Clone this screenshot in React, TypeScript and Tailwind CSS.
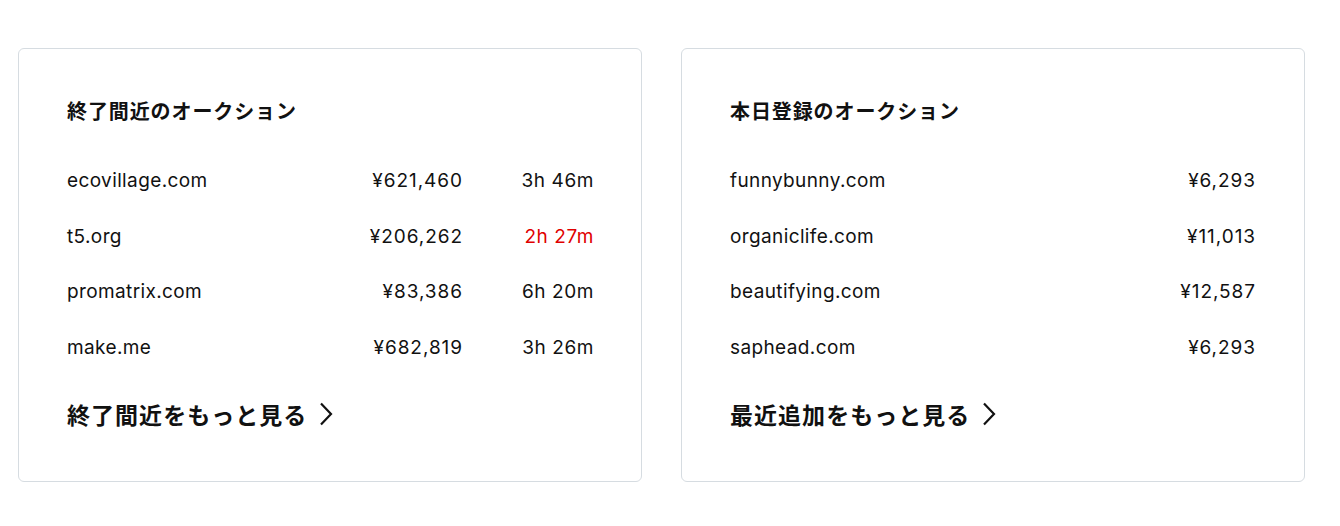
import React from "react";

const font = { fontFamily: 'Inter, "Noto Sans CJK JP", sans-serif' };
const cjk = { fontFamily: '"Noto Sans CJK JP", sans-serif' };

function Chevron() {
  return (
    <svg width="14" height="24" viewBox="0 0 14 24" fill="none" className="ml-[12px]">
      <path d="M2 1.5 L12 12 L2 22.5" stroke="#111" strokeWidth="2.2" strokeLinejoin="miter" />
    </svg>
  );
}

type Row = { name: string; price: string; time?: string; red?: boolean };

function Card({ title, rows, link, showTime }: { title: string; rows: Row[]; link: string; showTime: boolean }) {
  return (
    <div className="w-[624px] border border-[#d6dce1] rounded-[6px] px-12 pt-12 pb-[51px] bg-white">
      <h2 style={cjk} className="text-[20px] leading-[28px] font-bold text-[#111] tracking-[0.045em]">{title}</h2>
      <div className="mt-[29px]">
        {rows.map((r) => (
          <div key={r.name} className="h-[55.4px] flex items-center text-[19px] text-[#111] tracking-[0.02em]">
            <span className="flex-1">{r.name}</span>
            <span className="text-right tracking-[0.05em]">{r.price}</span>
            {showTime && (
              <span className={"w-[131px] text-right tracking-[0.03em] mr-[-1px] " + (r.red ? "text-[#e00000]" : "")}>{r.time}</span>
            )}
          </div>
        ))}
      </div>
      <a style={cjk} className="mt-[22px] flex items-center text-[23px] leading-[32px] h-[32px] font-bold text-[#111] tracking-[0.045em]">
        {link}
        <Chevron />
      </a>
    </div>
  );
}

export default function App() {
  return (
    <div style={font} className="bg-white w-[1340px] h-[526px] pt-[48px] pl-[18px] flex items-start gap-[39px]">
      <Card
        title="終了間近のオークション"
        showTime
        rows={[
          { name: "ecovillage.com", price: "¥621,460", time: "3h 46m" },
          { name: "t5.org", price: "¥206,262", time: "2h 27m", red: true },
          { name: "promatrix.com", price: "¥83,386", time: "6h 20m" },
          { name: "make.me", price: "¥682,819", time: "3h 26m" },
        ]}
        link="終了間近をもっと見る"
      />
      <Card
        title="本日登録のオークション"
        showTime={false}
        rows={[
          { name: "funnybunny.com", price: "¥6,293" },
          { name: "organiclife.com", price: "¥11,013" },
          { name: "beautifying.com", price: "¥12,587" },
          { name: "saphead.com", price: "¥6,293" },
        ]}
        link="最近追加をもっと見る"
      />
    </div>
  );
}
